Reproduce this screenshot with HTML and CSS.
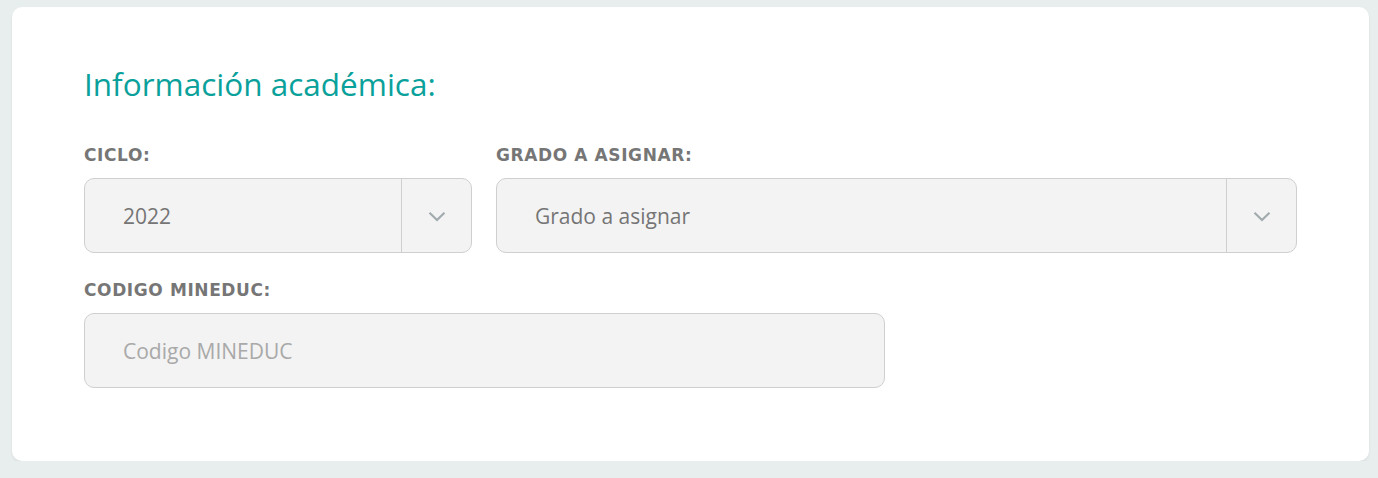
FILE: index.html
```html
<!DOCTYPE html>
<html lang="es">
<head>
<meta charset="utf-8">
<title>Información académica</title>
<link rel="stylesheet" href="styles.css">
</head>
<body>
<main class="card">
  <h2 class="title">Información académica:</h2>
  <div class="row">
    <div class="field field-sm">
      <label class="label">CICLO:</label>
      <div class="select">
        <span class="value">2022</span>
        <span class="arrow"><svg width="18" height="11" viewBox="0 0 18 11"><path d="M1.5 1.8 L9 9 L16.5 1.8" fill="none" stroke="#a2abae" stroke-width="2.2"/></svg></span>
      </div>
    </div>
    <div class="field field-lg">
      <label class="label">GRADO A ASIGNAR:</label>
      <div class="select">
        <span class="value">Grado a asignar</span>
        <span class="arrow"><svg width="18" height="11" viewBox="0 0 18 11"><path d="M1.5 1.8 L9 9 L16.5 1.8" fill="none" stroke="#a2abae" stroke-width="2.2"/></svg></span>
      </div>
    </div>
  </div>
  <div class="row">
    <div class="field field-lg">
      <label class="label">CODIGO MINEDUC:</label>
      <div class="input"><span class="placeholder">Codigo MINEDUC</span></div>
    </div>
  </div>
</main>
</body>
</html>
```
FILE: styles.css
```css
html, body { margin: 0; padding: 0; }
body {
  background: #e8eded;
  padding: 7px 9px 0 12px;
  font-family: "Open Sans", sans-serif;
}
.card {
  background: #fff;
  border-radius: 10px;
  height: 454px;
  box-sizing: border-box;
  padding: 59px 72px 0 72px;
  box-shadow: 0 2px 3px rgba(0,0,0,0.06);
}
.title {
  margin: 0 0 44px 0;
  font-weight: 400;
  font-size: 31.5px;
  line-height: 36px;
  color: #0aa19b;
}
.row {
  display: flex;
  gap: 24px;
  margin-bottom: 28px;
}
.field { display: flex; flex-direction: column; }
.field-sm { width: 388px; }
.field-lg { width: 801px; }
.label {
  font-family: "DejaVu Sans", sans-serif;
  font-weight: 700;
  font-size: 17px;
  line-height: 18px;
  color: #767676;
  margin: 0 0 14px 0;
  letter-spacing: 0.6px;
}
.select, .input {
  height: 75px;
  box-sizing: border-box;
  border: 1px solid #cfcfcf;
  border-radius: 10px;
  background: #f3f3f3;
  display: flex;
  align-items: center;
}
.value, .placeholder {
  flex: 1;
  padding-left: 38px;
  font-size: 21px;
  color: #757575;
}
.placeholder { color: #a9a9a9; }
.arrow {
  width: 70px;
  align-self: stretch;
  border-left: 1px solid #cfcfcf;
  display: flex;
  align-items: center;
  justify-content: center;
  padding-top: 2px;
  box-sizing: border-box;
}
```
